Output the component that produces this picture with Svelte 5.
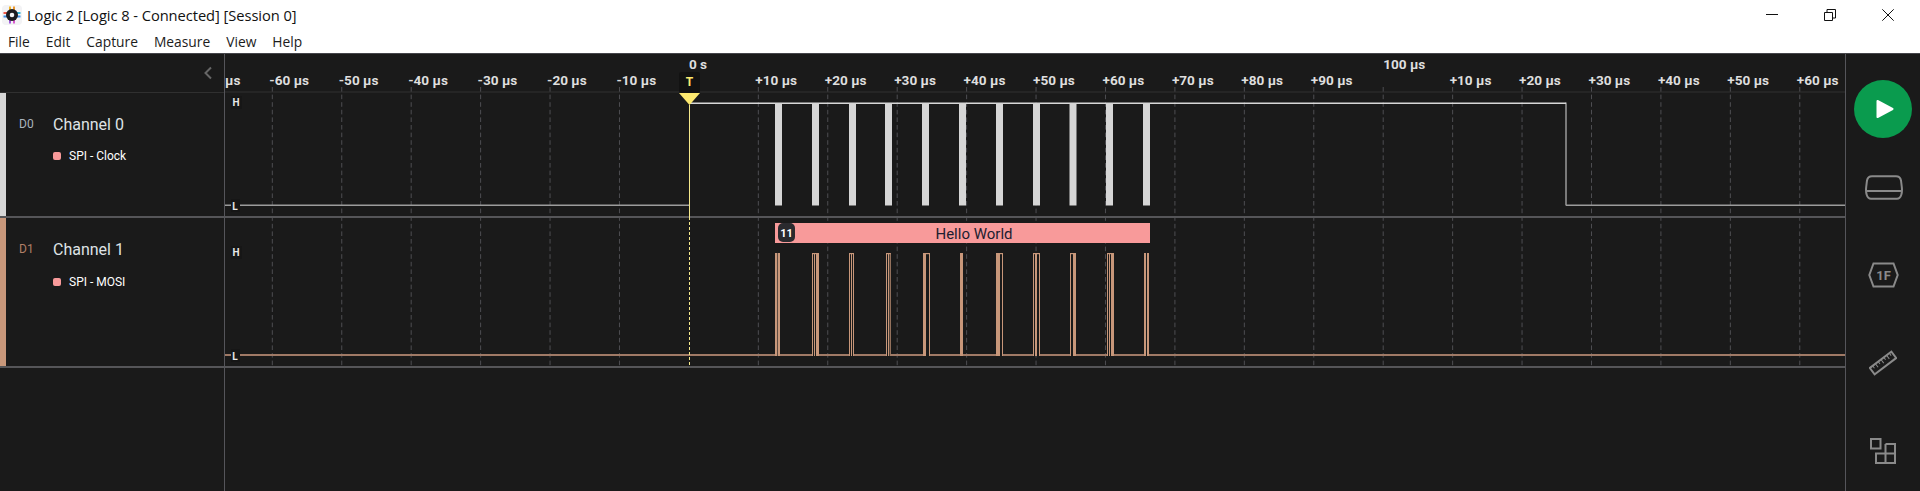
<script>
  const zero = 688.9;
  const step = 69.43;
  const gridBottom = 366;

  const signed = [];
  for (let n = -6; n <= 16; n++) {
    if (n === 0 || n === 10) continue;
    const base = n > 10 ? n - 10 : n;
    const label = (base > 0 ? '+' : '') + base * 10 + ' µs';
    signed.push({ x: zero + n * step, label });
  }
  const majors = [
    { x: zero, label: '0 s' },
    { x: zero + 10 * step, label: '100 µs' }
  ];
  const grid = [...signed.map((s) => s.x), zero + 10 * step];

  const clock = [775, 812, 849, 885, 922, 959, 996, 1033, 1069.5, 1106, 1143];

  // Each group of MOSI pulses: the filled strokes, and whether a top line joins them.
  const mosi = [
    { bars: [[775, 2.4], [778, 2]], joined: false },
    { bars: [[812, 1], [814, 1], [816, 3]], joined: true },
    { bars: [[849, 1], [851, 1], [853, 1]], joined: true },
    { bars: [[886, 1], [888, 1], [889.7, 1]], joined: true },
    { bars: [[923, 3], [929, 1]], joined: true },
    { bars: [[960, 3]], joined: false },
    { bars: [[996, 4], [1002, 1]], joined: true },
    { bars: [[1033, 1], [1035, 2], [1039, 1]], joined: true },
    { bars: [[1070, 1], [1073, 3]], joined: true },
    { bars: [[1107, 1], [1109, 1], [1111, 3]], joined: true },
    { bars: [[1144, 2], [1147, 2]], joined: false }
  ];
  const groupEnds = mosi.map((g) => {
    const last = g.bars[g.bars.length - 1];
    return [g.bars[0][0], last[0] + last[1]];
  });
  const lows = [];
  let cursor = 225;
  for (const [a, b] of groupEnds) {
    lows.push([cursor, a]);
    cursor = b;
  }
  lows.push([cursor, 1845]);

  const menu = ['File', 'Edit', 'Capture', 'Measure', 'View', 'Help'];
  const channels = [
    { id: 'D0', name: 'Channel 0', analyzer: 'SPI - Clock', kind: 'ch0' },
    { id: 'D1', name: 'Channel 1', analyzer: 'SPI - MOSI', kind: 'ch1' }
  ];
</script>

<div class="app">
  <header class="titlebar">
    <div class="title-row">
      <svg class="logo" viewBox="0 0 20 20" width="20" height="20" aria-hidden="true">
        <rect x="0" y="0" width="20" height="20" rx="4" fill="#f3f3f5" />
        <rect x="1.5" y="7" width="4" height="2" fill="#ef5a4c" />
        <rect x="1.5" y="10.5" width="4" height="2" fill="#3f8ee8" />
        <rect x="14.5" y="7" width="4" height="2" fill="#35b7d8" />
        <rect x="14.5" y="10.5" width="4" height="2" fill="#3f8ee8" />
        <rect x="7" y="1.5" width="2" height="4" fill="#f5b82e" />
        <rect x="11" y="1.5" width="2" height="4" fill="#f09a2e" />
        <rect x="7" y="14.5" width="2" height="4" fill="#a05be0" />
        <rect x="11" y="14.5" width="2" height="4" fill="#d95ad0" />
        <circle cx="10" cy="10" r="6" fill="#1b1b1f" />
        <circle cx="10" cy="10" r="2.3" fill="#f3f3f5" />
      </svg>
      <span class="title">Logic 2 [Logic 8 - Connected] [Session 0]</span>
      <div class="window-buttons">
        <svg viewBox="0 0 12 12" width="12" height="12" aria-hidden="true"><path d="M0 5.5H12" /></svg>
        <svg viewBox="0 0 12 12" width="12" height="12" aria-hidden="true"><path d="M.5 3.5h8v8h-8zM3 3.5V.5h8.5v8.5h-3" /></svg>
        <svg viewBox="0 0 12 12" width="12" height="12" aria-hidden="true"><path d="M.3 .3 11.7 11.7M11.7 .3 .3 11.7" /></svg>
      </div>
    </div>
    <nav class="menu">
      {#each menu as item}<span>{item}</span>{/each}
    </nav>
  </header>

  <main class="workspace">
    <aside class="channels">
      <div class="collapse">
        <svg viewBox="0 0 10 14" width="10" height="14" aria-hidden="true"><path d="M8 1.5 2.5 7 8 12.5" /></svg>
      </div>
      {#each channels as c}
        <section class="channel {c.kind}">
          <div class="strip"></div>
          <div class="channel-body">
            <div class="channel-head">
              <span class="cid">{c.id}</span>
              <span class="cname">{c.name}</span>
            </div>
            <div class="analyzer"><i></i><span>{c.analyzer}</span></div>
          </div>
        </section>
      {/each}
    </aside>

    <div class="canvas">
      <svg class="wave" viewBox="225 54 1620 437" width="1620" height="437">
        <rect x="225" y="91.5" width="1620" height="1" fill="#303030" />

        {#each grid as x}
          <line class="tick" x1={x} x2={x} y1="87" y2={gridBottom} />
        {/each}

        <rect x="225" y="216" width="1620" height="2" fill="#555558" />
        <rect x="225" y="366" width="1620" height="2" fill="#555558" />

        <text class="axis" x="225" y="85">µs</text>
        {#each signed as s}
          <text class="axis" x={s.x - 3} y="85">{s.label}</text>
        {/each}
        {#each majors as m}
          <text class="axis" x={m.x} y="69">{m.label}</text>
        {/each}

        <!-- Channel 0 -->
        <rect x="225" y="204.5" width="464" height="1.5" fill="#9c9c9c" />
        <rect x="689" y="102.5" width="877" height="1.5" fill="#d8d8d8" />
        <rect x="1565.5" y="102.5" width="1" height="103" fill="#d8d8d8" />
        <rect x="1566" y="204.5" width="279" height="1.5" fill="#9c9c9c" />
        {#each clock as x}
          <rect {x} y="103" width="7" height="102.5" fill="#d6d6d6" />
        {/each}

        <!-- Channel 1 -->
        {#each lows as [a, b]}
          <rect x={a} y="354" width={b - a} height="2" fill="#a07a66" />
        {/each}
        {#each mosi as g, i}
          {#if g.joined}
            <rect x={groupEnds[i][0]} y="253" width={groupEnds[i][1] - groupEnds[i][0]} height="1.2" fill="#c8977a" />
          {/if}
          {#each g.bars as [x, w]}
            <rect {x} y="253" width={w} height="103" fill="#c8977a" />
          {/each}
        {/each}

        <!-- SPI frame -->
        <rect x="775" y="223" width="375" height="20" fill="#f89a9a" />
        <rect x="778" y="223" width="17" height="19" rx="5" fill="#2a2a2e" />
        <text class="badge" x="786.5" y="236.5">11</text>
        <text class="frame" x="974" y="238.5">Hello World</text>

        <!-- H / L markers -->
        <rect x="231" y="96" width="11" height="13" fill="#161616" />
        <rect x="231" y="246" width="11" height="13" fill="#161616" />
        <rect x="231" y="199" width="9" height="13" fill="#161616" />
        <rect x="231" y="349" width="9" height="13" fill="#161616" />
        <text class="level" x="236" y="106">H</text>
        <text class="level" x="236" y="256">H</text>
        <text class="level" x="235" y="210">L</text>
        <text class="level" x="235" y="360">L</text>

        <!-- Trigger marker -->
        <rect x="679" y="72" width="21" height="21" rx="2" fill="#121212" />
        <text class="trigger" x="689.5" y="86">T</text>
        <path d="M679 93H700L689.5 105Z" fill="#fde96f" />
        <line x1="689.5" x2="689.5" y1="105" y2="217" stroke="#f6e98c" stroke-width="1" />
        <line x1="689.5" x2="689.5" y1="217" y2={gridBottom} stroke="#f6e98c" stroke-width="1" stroke-dasharray="3 2" />
      </svg>
    </div>

    <aside class="rail">
      <button class="play" aria-label="Start capture">
        <svg viewBox="0 0 18 20" width="18" height="20" aria-hidden="true"><path d="M1.5 2 16.5 10 1.5 18Z" /></svg>
      </button>
      <div class="tool first">
        <svg viewBox="0 0 38 25" width="38" height="25" aria-hidden="true">
          <path d="M7 1.2H31C34 1.2 35.5 3 36 5.5L36.8 12C37.4 17 36.5 23.8 32 23.8H6C1.5 23.8.6 17 1.2 12L2 5.5C2.5 3 4 1.2 7 1.2Z" />
          <path d="M1.6 16H36.4" />
        </svg>
      </div>
      <div class="tool">
        <svg viewBox="0 0 31 26" width="31" height="26" aria-hidden="true">
          <path d="M1.3 13 5.5 1.5H25.5L29.7 13 25.5 24.5H5.5Z" />
          <text x="15.5" y="18">1F</text>
        </svg>
      </div>
      <div class="tool">
        <svg viewBox="0 0 28 26" width="28" height="26" aria-hidden="true">
          <g transform="rotate(-37 14 13)">
            <rect x="0.5" y="9" width="27" height="8" />
            <path class="thin" d="M4 9V12M7.5 9V13.5M11 9V12M14.5 9V13.5M18 9V12M21.5 9V13.5M25 9V12" />
          </g>
        </svg>
      </div>
      <div class="tool">
        <svg viewBox="0 0 26 26" width="26" height="26" aria-hidden="true">
          <rect x="1" y="1" width="9.5" height="9.5" />
          <path d="M15.5 6H25V25H6V15.5H25M15.5 6V25" />
        </svg>
      </div>
    </aside>
  </main>
</div>

<style>
  :global(body) {
    margin: 0;
    background: #1a1a1a;
  }
  .app {
    display: flex;
    flex-direction: column;
    width: 1920px;
    height: 491px;
    overflow: hidden;
    font-family: Roboto, sans-serif;
  }
  .titlebar {
    height: 53px;
    background: #fff;
    border-bottom: 1px solid #45454a;
    font-family: 'Open Sans', sans-serif;
    color: #111;
  }
  .title-row {
    display: flex;
    align-items: center;
    height: 29px;
    padding-left: 2px;
  }
  .logo {
    margin-right: 5px;
  }
  .title {
    font-size: 14.7px;
    letter-spacing: -0.06px;
  }
  .window-buttons {
    display: flex;
    gap: 46px;
    margin-left: auto;
    margin-right: 26px;
  }
  .window-buttons svg {
    fill: none;
    stroke: #111;
    stroke-width: 1;
  }
  .menu {
    display: flex;
    gap: 16px;
    padding-left: 8px;
    height: 24px;
    align-items: center;
    font-size: 13.8px;
    color: #1c1c1c;
  }
  .workspace {
    display: flex;
    flex: 1;
    min-height: 0;
    background: #1a1a1a;
  }
  .channels {
    width: 224px;
    flex: none;
    border-right: 1px solid #55555a;
  }
  .collapse {
    display: flex;
    align-items: center;
    justify-content: flex-end;
    height: 38px;
    padding-right: 11px;
    border-bottom: 1px solid #303030;
  }
  .collapse svg {
    fill: none;
    stroke: #666;
    stroke-width: 2;
  }
  .channel {
    display: flex;
    border-bottom: 2px solid #555558;
    color: #dfe3e6;
  }
  .channel.ch0 {
    height: 123px;
  }
  .channel.ch1 {
    height: 148px;
  }
  .strip {
    width: 6px;
    background: #d6d6d6;
  }
  .ch1 .strip {
    background: #c8977a;
  }
  .channel-body {
    padding-top: 21px;
  }
  .channel-head {
    display: flex;
    align-items: center;
    height: 20px;
  }
  .cid {
    width: 34px;
    padding-left: 13px;
    font-size: 12px;
    color: #a9b4bd;
    box-sizing: content-box;
  }
  .ch1 .cid {
    color: #b07f66;
  }
  .cname {
    font-size: 16px;
  }
  .analyzer {
    display: flex;
    align-items: center;
    gap: 8px;
    margin-top: 15px;
    margin-left: 47px;
    font-size: 12px;
    color: #fff;
  }
  .ch1 .analyzer {
    margin-top: 16px;
  }
  .analyzer i {
    width: 8px;
    height: 8px;
    border-radius: 2px;
    background: #f89a9a;
  }
  .canvas {
    width: 1620px;
    flex: none;
    border-right: 1px solid #55555a;
  }
  .wave {
    display: block;
  }
  .tick {
    stroke: #4e4e52;
    stroke-width: 1;
    stroke-dasharray: 4.6 3;
  }
  .axis {
    font: 700 13.6px Roboto, sans-serif;
    fill: #dedede;
  }
  .badge {
    font: 700 11px Roboto, sans-serif;
    fill: #fff;
    text-anchor: middle;
  }
  .frame {
    font: 400 15px Roboto, sans-serif;
    fill: #1c2030;
    text-anchor: middle;
  }
  .level {
    font: 700 10px Roboto, sans-serif;
    fill: #e8e8e8;
    text-anchor: middle;
  }
  .trigger {
    font: 700 12px Roboto, sans-serif;
    fill: #fde96f;
    text-anchor: middle;
  }
  .rail {
    flex: 1;
    display: flex;
    flex-direction: column;
    align-items: center;
    padding-top: 26px;
  }
  .play {
    width: 58px;
    height: 58px;
    flex: none;
    display: flex;
    align-items: center;
    justify-content: center;
    padding: 0 0 0 3px;
    border: 0;
    border-radius: 50%;
    background: #0a9b4e;
  }
  .play path {
    fill: #fff;
    stroke: #fff;
    stroke-width: 2;
    stroke-linejoin: round;
  }
  .tool {
    flex: none;
    height: 88px;
    display: flex;
    align-items: center;
    justify-content: center;
  }
  .tool.first {
    margin-top: 5px;
    padding-left: 1px;
  }
  .tool svg {
    fill: none;
    stroke: #8a8a8a;
    stroke-width: 2;
  }
  .tool text {
    font: 700 13px Roboto, sans-serif;
    fill: #8a8a8a;
    stroke: none;
    text-anchor: middle;
  }
  .tool .thin {
    stroke-width: 1;
  }
</style>
